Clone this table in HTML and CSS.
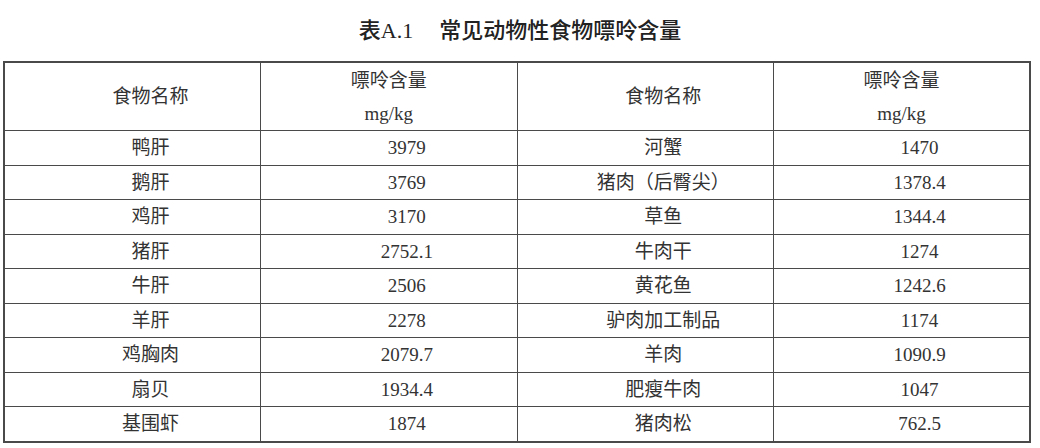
FILE: index.html
```html
<!DOCTYPE html>
<html lang="zh-CN">
<head>
<meta charset="utf-8">
<title>表A.1 常见动物性食物嘌呤含量</title>
<link rel="stylesheet" href="styles.css">
</head>
<body>
<div class="title"><span class="tno">表A.1</span><span class="tname">常见动物性食物嘌呤含量</span></div>
<table class="purine">
  <colgroup><col><col><col><col></colgroup>
  <thead>
    <tr>
      <th class="name">食物名称</th>
      <th class="qh"><div class="l1">嘌呤含量</div><div class="l2">mg/kg</div></th>
      <th class="name">食物名称</th>
      <th class="qh"><div class="l1">嘌呤含量</div><div class="l2">mg/kg</div></th>
    </tr>
  </thead>
  <tbody>
    <tr><td>鸭肝</td><td>3979</td><td>河蟹</td><td>1470</td></tr>
    <tr><td>鹅肝</td><td>3769</td><td>猪肉（后臀尖）</td><td>1378.4</td></tr>
    <tr><td>鸡肝</td><td>3170</td><td>草鱼</td><td>1344.4</td></tr>
    <tr><td>猪肝</td><td>2752.1</td><td>牛肉干</td><td>1274</td></tr>
    <tr><td>牛肝</td><td>2506</td><td>黄花鱼</td><td>1242.6</td></tr>
    <tr><td>羊肝</td><td>2278</td><td>驴肉加工制品</td><td>1174</td></tr>
    <tr><td>鸡胸肉</td><td>2079.7</td><td>羊肉</td><td>1090.9</td></tr>
    <tr><td>扇贝</td><td>1934.4</td><td>肥瘦牛肉</td><td>1047</td></tr>
    <tr><td>基围虾</td><td>1874</td><td>猪肉松</td><td>762.5</td></tr>
  </tbody>
</table>
</body>
</html>
```
FILE: styles.css
```css
html, body {
  margin: 0;
  padding: 0;
  background: #ffffff;
}
body {
  font-family: "Liberation Serif", "Noto Sans CJK SC", serif;
  color: #333333;
}
.title {
  height: 61px;
  box-sizing: border-box;
  padding-bottom: 5px;
  display: flex;
  align-items: center;
  justify-content: center;
  font-size: 22px;
  font-weight: 500;
  color: #222222;
}
.tno {
  margin-right: 26px;
}
.tname {
  font-family: "Noto Sans CJK SC", sans-serif;
}
.purine {
  margin-left: 3px;
  width: 1028px;
  table-layout: fixed;
  border-collapse: collapse;
  border: 2px solid #4a4a4a;
}
.purine th,
.purine td {
  border: 1px solid #4a4a4a;
  text-align: center;
  vertical-align: middle;
  font-size: 19px;
  font-weight: normal;
  line-height: 1;
  padding: 0 0 0 36px;
  height: 33.5px;
}
.purine th {
  height: 67px;
}
.purine th.qh {
  padding-left: 0;
}
.qh .l1 {
  height: 33px;
  line-height: 33px;
}
.qh .l2 {
  height: 33px;
  line-height: 33px;
}
```
